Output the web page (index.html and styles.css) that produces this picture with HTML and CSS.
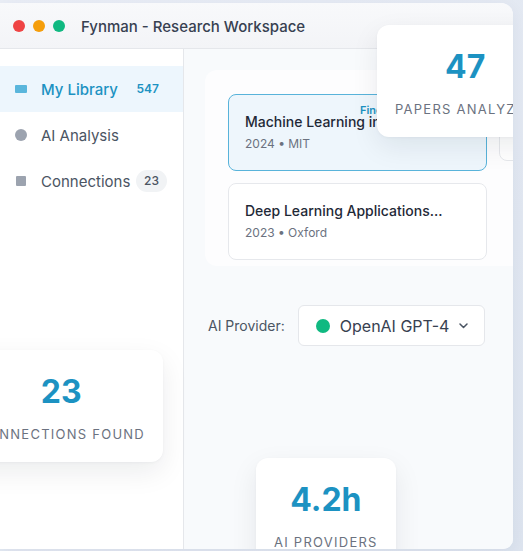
FILE: index.html
```html
<!DOCTYPE html>
<html lang="en">
<head>
<meta charset="utf-8">
<title>Fynman - Research Workspace</title>
<link rel="stylesheet" href="styles.css">
</head>
<body>
<div class="stage">
  <div class="window">
    <header class="titlebar">
      <span class="dot red"></span>
      <span class="dot amber"></span>
      <span class="dot green"></span>
      <span class="title">Fynman - Research Workspace</span>
    </header>
    <div class="body">
      <aside class="sidebar">
        <div class="nav-item active">
          <span class="ico"><span class="ico-rect"></span></span>
          <span class="nav-label">My Library</span>
          <span class="badge badge-active">547</span>
        </div>
        <div class="nav-item">
          <span class="ico"><span class="ico-circle"></span></span>
          <span class="nav-label">AI Analysis</span>
        </div>
        <div class="nav-item">
          <span class="ico"><span class="ico-square"></span></span>
          <span class="nav-label">Connections</span>
          <span class="badge">23</span>
        </div>
      </aside>
      <main class="main">
        <section class="panel">
          <div class="grid">
            <div class="card selected">
              <span class="tag">Finding</span>
              <div class="card-title">Machine Learning in Healthcare</div>
              <div class="meta">2024 • MIT</div>
            </div>
            <div class="card short">
              <div class="card-title">Neural Networks</div>
              <div class="meta">2024 • Stanford</div>
            </div>
            <div class="card">
              <div class="card-title">Deep Learning Applications...</div>
              <div class="meta">2023 • Oxford</div>
            </div>
          </div>
        </section>
        <div class="provider">
          <span class="provider-label">AI Provider:</span>
          <div class="select">
            <span class="status"></span>
            <span class="select-text">OpenAI GPT-4</span>
            <svg class="chevron" width="9" height="6" viewBox="0 0 9 6"><path d="M1 1 L4.5 4.5 L8 1" fill="none" stroke="#4b5563" stroke-width="1.5" stroke-linecap="round" stroke-linejoin="round"/></svg>
          </div>
        </div>
      </main>
    </div>

    <div class="stat stat-papers">
      <div class="stat-num">47</div>
      <div class="stat-label">PAPERS ANALYZED</div>
    </div>
    <div class="stat stat-connections">
      <div class="stat-num">23</div>
      <div class="stat-label">CONNECTIONS FOUND</div>
    </div>
    <div class="stat stat-providers">
      <div class="stat-num">4.2h</div>
      <div class="stat-label">AI PROVIDERS</div>
    </div>
  </div>
</div>
</body>
</html>
```
FILE: styles.css
```css
* { box-sizing: border-box; }

html, body {
  margin: 0;
  padding: 0;
}

body {
  width: 523px;
  height: 551px;
  overflow: hidden;
  background: linear-gradient(135deg, #eaeef6 0%, #dde4ef 100%);
  font-family: Inter, "Noto Sans", "Liberation Sans", sans-serif;
}

.stage {
  padding: 3px 10px 0 0;
}

.window {
  position: relative;
  width: 513px;
  height: 546px;
  background: #f8fafc;
  border-radius: 0 12px 10px 0;
  overflow: hidden;
  display: flex;
  flex-direction: column;
  box-shadow: 0 4px 16px rgba(30, 50, 90, 0.06);
}

.titlebar {
  height: 46px;
  flex-shrink: 0;
  display: flex;
  align-items: center;
  gap: 8px;
  padding: 1px 0 0 13px;
  background: linear-gradient(180deg, #f8f9fb 0%, #f3f4f7 100%);
  border-bottom: 1px solid #e5e7eb;
}

.dot {
  width: 12px;
  height: 12px;
  border-radius: 50%;
}
.dot.red { background: #ef4444; }
.dot.amber { background: #f59e0b; }
.dot.green { background: #10b981; }

.title {
  margin-left: 8px;
  font-size: 15px;
  font-weight: 500;
  color: #374151;
}

.body {
  flex: 1;
  display: flex;
  min-height: 0;
}

.sidebar {
  width: 184px;
  flex-shrink: 0;
  background: #ffffff;
  border-right: 1px solid #e5e7eb;
  padding-top: 17px;
}

.nav-item {
  height: 46px;
  display: flex;
  align-items: center;
  padding: 0 16px 0 15px;
  font-size: 15px;
  color: #4b5563;
}

.nav-item.active {
  background: #edf6fd;
  color: #1c92c2;
  font-weight: 500;
}

.ico {
  width: 12px;
  height: 12px;
  margin-right: 14px;
  display: flex;
  align-items: center;
  justify-content: center;
}
.ico-rect {
  width: 12px;
  height: 8px;
  border-radius: 1px;
  background: #5ab6dc;
}
.ico-circle {
  width: 12px;
  height: 12px;
  border-radius: 50%;
  background: #9ca3af;
}
.ico-square {
  width: 10px;
  height: 10px;
  border-radius: 1px;
  background: #9ca3af;
}

.badge {
  margin-left: auto;
  padding: 2px 8px;
  border-radius: 11px;
  font-size: 12px;
  line-height: 18px;
  font-weight: 500;
  background: #f1f3f5;
  color: #4b5563;
}
.badge-active {
  background: transparent;
  color: #1c92c2;
  font-weight: 600;
}

.main {
  flex: 1;
  min-width: 0;
  overflow: hidden;
  padding: 21px 0 0 21px;
  background: #f8fafc;
}

.panel {
  width: 576px;
  padding: 24px 23px 6px;
  background: #fdfdfe;
  border-radius: 12px;
}

.grid {
  display: grid;
  grid-template-columns: 259px 259px;
  gap: 12px;
  align-items: start;
}

.card {
  position: relative;
  padding: 17px 16px 18px;
  background: #ffffff;
  border: 1px solid #e6e8ec;
  border-radius: 8px;
}
.card.selected {
  background: #eef6fc;
  border-color: #58b3da;
}
.card.short {
  padding-bottom: 8px;
}

.tag {
  position: absolute;
  top: 9px;
  left: 131px;
  font-size: 11px;
  line-height: 13px;
  font-weight: 600;
  color: #1c92c2;
}

.card-title {
  font-size: 14px;
  line-height: 20px;
  font-weight: 500;
  color: #1f2937;
  white-space: nowrap;
}

.meta {
  margin-top: 4px;
  font-size: 12px;
  line-height: 16px;
  color: #6b7280;
}

.provider {
  margin-top: 39px;
  padding-left: 3px;
  display: flex;
  align-items: center;
  gap: 13px;
}

.provider-label {
  font-size: 14px;
  color: #4b5563;
}

.select {
  width: 187px;
  height: 41px;
  display: flex;
  align-items: center;
  padding: 0 16px 0 17px;
  background: #ffffff;
  border: 1px solid #e5e7eb;
  border-radius: 6px;
}

.status {
  width: 14px;
  height: 14px;
  border-radius: 50%;
  background: #10b981;
  margin-right: 10px;
}

.select-text {
  font-size: 16px;
  color: #374151;
}

.chevron {
  margin-left: auto;
}

.stat {
  position: absolute;
  padding: 20px 18px;
  background: #ffffff;
  border-radius: 12px;
  text-align: center;
  box-shadow: 0 10px 28px rgba(15, 23, 42, 0.08), 0 1px 3px rgba(15, 23, 42, 0.04);
}

.stat-papers { left: 377px; top: 22px; }
.stat-connections { right: 350px; top: 347px; }
.stat-providers { left: 256px; top: 455px; }

.stat-num {
  font-size: 32px;
  line-height: 44px;
  font-weight: 700;
  color: #1c92c2;
}

.stat-label {
  margin-top: 12px;
  font-size: 13px;
  line-height: 16px;
  font-weight: 400;
  letter-spacing: 1.25px;
  color: #6b7280;
  white-space: nowrap;
}
```
